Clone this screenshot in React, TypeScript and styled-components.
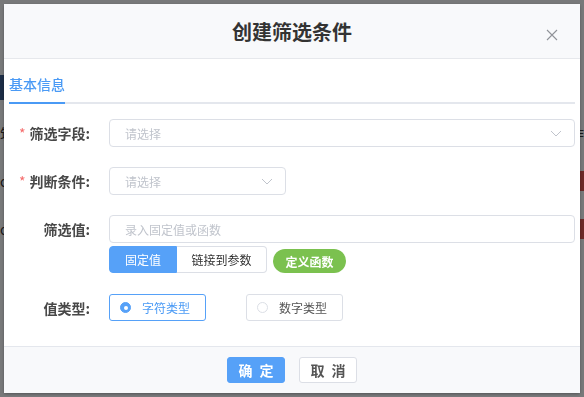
import styled, { createGlobalStyle } from "styled-components";

const GlobalStyle = createGlobalStyle`
  * {
    box-sizing: border-box;
  }
  body {
    margin: 0;
    font-family: "Noto Sans CJK SC", "Noto Sans", sans-serif;
    color: #333;
  }
`;

const BLUE = "#56a1f8";

/* page behind the mask */
const BgPage = styled.div`
  height: 100vh;
  background: #f0f2f5;
  padding-top: 75px;
  overflow: hidden;
`;

const BgTab = styled.div`
  width: 80px;
  height: 25px;
  background: #3a5a8c;
  margin-bottom: 9px;
`;

const BgRow = styled.div`
  display: flex;
  justify-content: space-between;
  align-items: center;
  height: 48px;
  font-size: 14px;
  color: #333;
`;

const BgDanger = styled.span`
  width: 60px;
  height: 20px;
  background: #d9534f;
  visibility: ${(p: { $show?: boolean }) => (p.$show ? "visible" : "hidden")};
`;

/* dialog */
const Mask = styled.div`
  position: fixed;
  inset: 0;
  background: rgba(0, 0, 0, 0.5);
  display: flex;
  align-items: center;
  justify-content: center;
`;

const Dialog = styled.div`
  width: 576px;
  height: 389px;
  background: #fff;
  border-radius: 2px;
  display: flex;
  flex-direction: column;
  box-shadow: 0 1px 3px rgba(0, 0, 0, 0.3);
`;

const Header = styled.div`
  position: relative;
  height: 55px;
  background: #f8f9fb;
  border-bottom: 1px solid #e6e8ec;
  display: flex;
  align-items: center;
  justify-content: center;
`;

const Title = styled.h2`
  margin: 0;
  font-size: 20px;
  font-weight: 700;
  color: #333;
  letter-spacing: 0;
`;

const CloseButton = styled.button`
  position: absolute;
  right: 22px;
  top: 25px;
  width: 12px;
  height: 12px;
  padding: 0;
  border: none;
  background: none;
  cursor: pointer;
  display: flex;
`;

const Body = styled.div`
  flex: 1;
  padding: 0 5px;
`;

const Tabs = styled.div`
  height: 45px;
  display: flex;
  align-items: flex-end;
  border-bottom: 2px solid #e4e7ed;
`;

const Tab = styled.div<{ $active?: boolean }>`
  height: 36px;
  line-height: 36px;
  padding: 0;
  font-size: 14px;
  font-weight: 500;
  color: ${(p) => (p.$active ? "#4a9af5" : "#333")};
  border-bottom: 2px solid ${(p) => (p.$active ? "#4a9af5" : "transparent")};
  margin-bottom: -2px;
  box-sizing: content-box;
`;

const Form = styled.div`
  padding-top: 15px;
`;

const Row = styled.div<{ $gap?: number }>`
  display: flex;
  align-items: flex-start;
  margin-bottom: ${(p) => p.$gap ?? 20}px;
`;

const Label = styled.label`
  width: 81px;
  margin-right: 19px;
  flex-shrink: 0;
  text-align: right;
  line-height: 28px;
  font-size: 14px;
  font-weight: 600;
  color: #484848;
`;

const Star = styled.span`
  color: #f56c6c;
  font-weight: 400;
  margin-right: 4px;
`;

const Field = styled.div`
  flex: 1;
  display: flex;
  flex-direction: column;
`;

const Select = styled.div<{ $width?: number }>`
  width: ${(p) => (p.$width ? `${p.$width}px` : "100%")};
  height: 28px;
  border: 1px solid #dcdfe6;
  border-radius: 4px;
  padding: 0 12px 0 15px;
  display: flex;
  align-items: center;
  justify-content: space-between;
  font-size: 12px;
  color: #c0c4cc;
`;

const TextInput = styled.input`
  width: 100%;
  height: 28px;
  border: 1px solid #dcdfe6;
  border-radius: 4px;
  padding: 0 15px;
  font-size: 12px;
  font-family: inherit;
  color: #333;
  outline: none;

  &::placeholder {
    color: #c0c4cc;
  }
`;

const ButtonLine = styled.div`
  display: flex;
  align-items: flex-end;
  margin-top: 3px;
`;

const Segment = styled.div`
  display: flex;
`;

const SegButton = styled.button<{ $active?: boolean; $width: number }>`
  width: ${(p) => p.$width}px;
  height: 27px;
  padding: 0;
  font-family: inherit;
  font-size: 12px;
  border: 1px solid ${(p) => (p.$active ? BLUE : "#dcdfe6")};
  background: ${(p) => (p.$active ? BLUE : "#fff")};
  color: ${(p) => (p.$active ? "#fff" : "#333")};
  cursor: pointer;

  &:first-child {
    border-radius: 4px 0 0 4px;
  }
  &:last-child {
    border-radius: 0 4px 4px 0;
    border-left: none;
  }
`;

const PillButton = styled.button`
  margin-left: 6px;
  width: 73px;
  height: 24px;
  padding: 0;
  border: none;
  border-radius: 12px;
  background: #7bc14f;
  color: #fff;
  font-family: inherit;
  font-size: 12px;
  font-weight: 700;
  cursor: pointer;
`;

const RadioLine = styled.div`
  display: flex;
  gap: 40px;
`;

const RadioCard = styled.label<{ $checked?: boolean }>`
  width: 97px;
  height: 27px;
  border: 1px solid ${(p) => (p.$checked ? BLUE : "#dcdfe6")};
  border-radius: 3px;
  padding-left: 10px;
  display: flex;
  align-items: center;
  gap: 11px;
  font-size: 12px;
  color: ${(p) => (p.$checked ? "#4a9af5" : "#555")};
  cursor: pointer;
`;

const RadioDot = styled.span<{ $checked?: boolean }>`
  width: 11px;
  height: 11px;
  border-radius: 50%;
  border: 1px solid ${(p) => (p.$checked ? BLUE : "#dcdfe6")};
  background: ${(p) => (p.$checked ? BLUE : "#fff")};
  display: flex;
  align-items: center;
  justify-content: center;

  &::after {
    content: "";
    width: 4px;
    height: 4px;
    border-radius: 50%;
    background: #fff;
    display: ${(p) => (p.$checked ? "block" : "none")};
  }
`;

const Footer = styled.div`
  height: 47px;
  background: #f8f9fb;
  border-top: 1px solid #e4e7ed;
  display: flex;
  align-items: center;
  justify-content: center;
  gap: 14px;
`;

const FooterButton = styled.button<{ $primary?: boolean }>`
  width: 58px;
  height: 26px;
  padding: 0;
  border-radius: 3px;
  border: 1px solid ${(p) => (p.$primary ? BLUE : "#dcdfe6")};
  background: ${(p) => (p.$primary ? BLUE : "#fff")};
  color: ${(p) => (p.$primary ? "#fff" : "#555")};
  font-family: inherit;
  font-size: 14px;
  font-weight: 700;
  letter-spacing: 2px;
  text-indent: 2px;
  cursor: pointer;
`;

function Chevron() {
  return (
    <svg width="12" height="7" viewBox="0 0 12 7" fill="none">
      <path d="M1 1l5 5 5-5" stroke="#c0c4cc" strokeWidth="1" />
    </svg>
  );
}

function CloseIcon() {
  return (
    <svg width="12" height="12" viewBox="0 0 12 12" fill="none">
      <path d="M1 1l10 10M11 1L1 11" stroke="#909399" strokeWidth="1.1" />
    </svg>
  );
}

export default function App() {
  return (
    <>
      <GlobalStyle />
      <BgPage>
        <BgTab />
        <BgRow>
          <span>筑</span>
          <span>作</span>
        </BgRow>
        <BgRow>
          <span>co</span>
          <BgDanger $show />
        </BgRow>
        <BgRow>
          <span>o</span>
          <BgDanger $show />
        </BgRow>
      </BgPage>

      <Mask>
        <Dialog>
          <Header>
            <Title>创建筛选条件</Title>
            <CloseButton aria-label="关闭">
              <CloseIcon />
            </CloseButton>
          </Header>

          <Body>
            <Tabs>
              <Tab $active>基本信息</Tab>
            </Tabs>

            <Form>
              <Row>
                <Label>
                  <Star>*</Star>筛选字段:
                </Label>
                <Field>
                  <Select>
                    <span>请选择</span>
                    <Chevron />
                  </Select>
                </Field>
              </Row>

              <Row>
                <Label>
                  <Star>*</Star>判断条件:
                </Label>
                <Field>
                  <Select $width={177}>
                    <span>请选择</span>
                    <Chevron />
                  </Select>
                </Field>
              </Row>

              <Row $gap={21}>
                <Label>筛选值:</Label>
                <Field>
                  <TextInput placeholder="录入固定值或函数" />
                  <ButtonLine>
                    <Segment>
                      <SegButton $active $width={68}>
                        固定值
                      </SegButton>
                      <SegButton $width={90}>链接到参数</SegButton>
                    </Segment>
                    <PillButton>定义函数</PillButton>
                  </ButtonLine>
                </Field>
              </Row>

              <Row>
                <Label>值类型:</Label>
                <RadioLine>
                  <RadioCard $checked>
                    <RadioDot $checked />
                    字符类型
                  </RadioCard>
                  <RadioCard>
                    <RadioDot />
                    数字类型
                  </RadioCard>
                </RadioLine>
              </Row>
            </Form>
          </Body>

          <Footer>
            <FooterButton $primary>确 定</FooterButton>
            <FooterButton>取 消</FooterButton>
          </Footer>
        </Dialog>
      </Mask>
    </>
  );
}
